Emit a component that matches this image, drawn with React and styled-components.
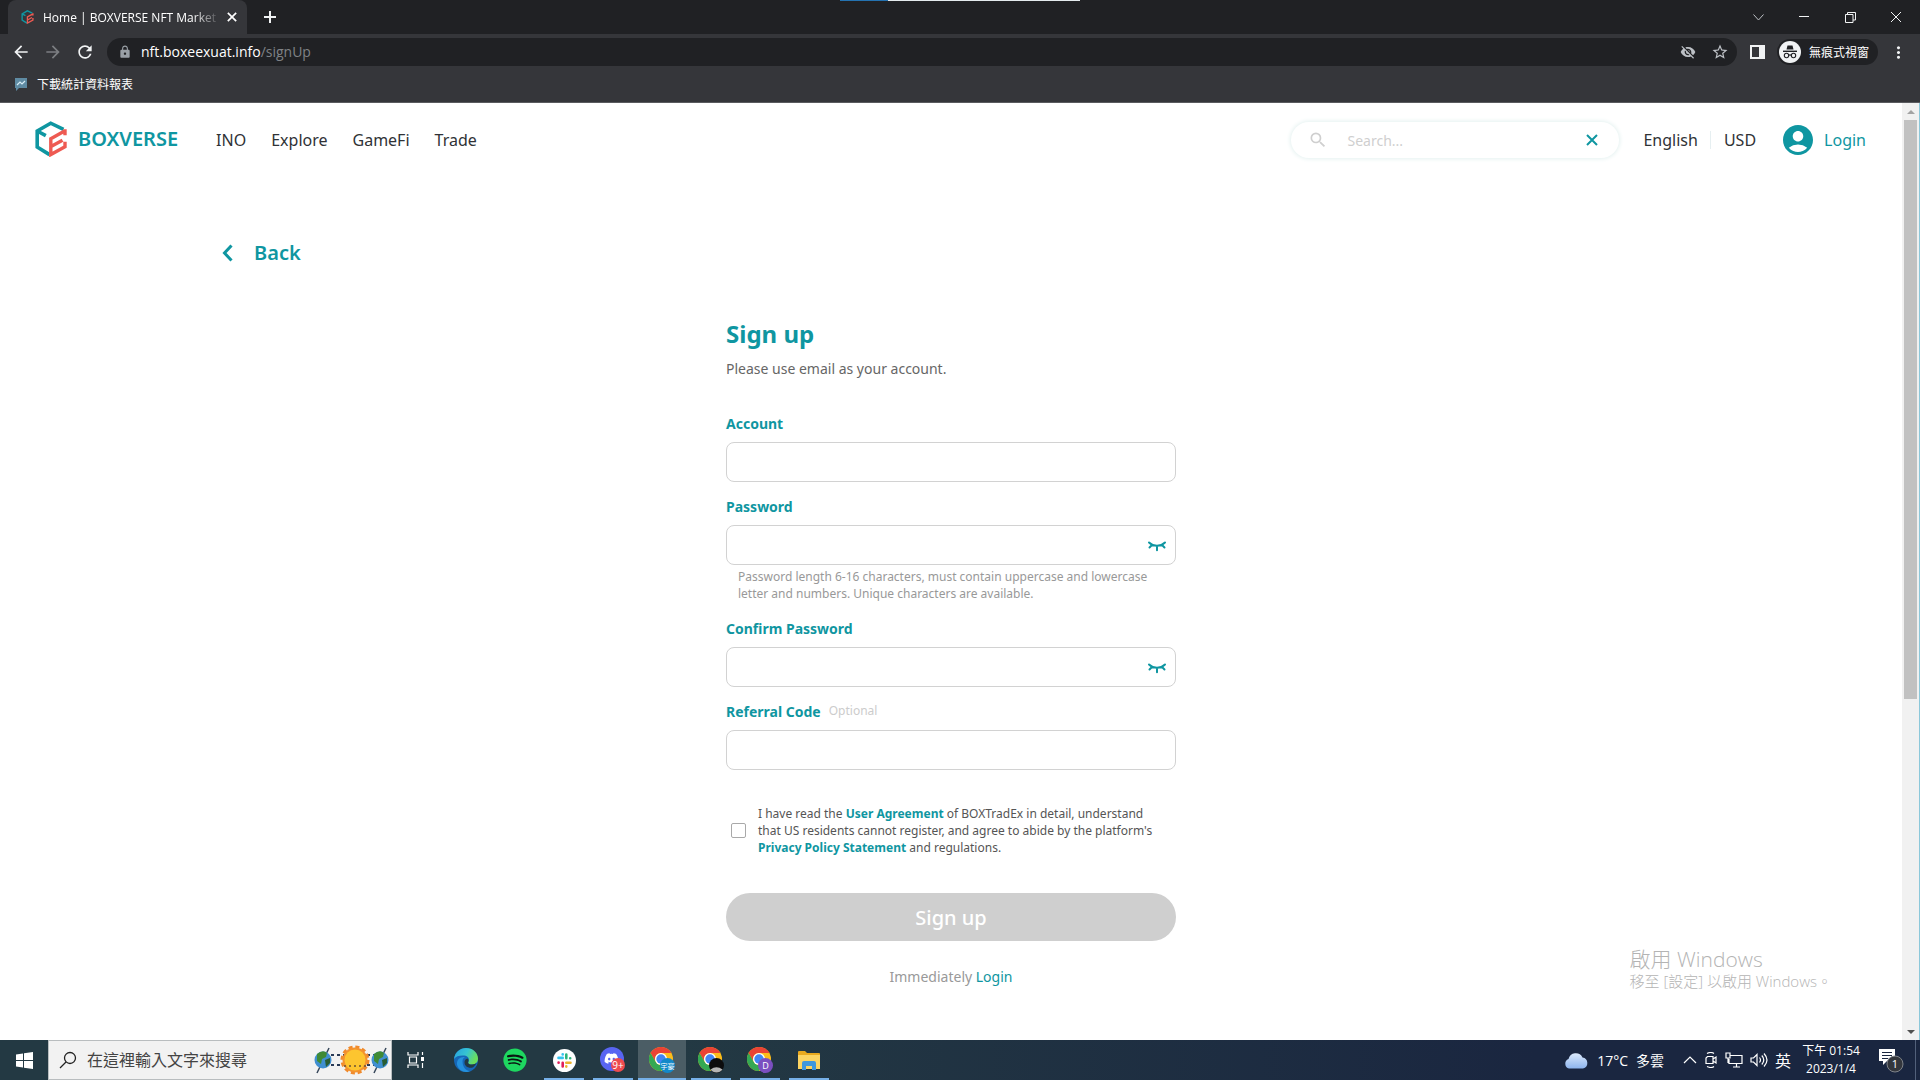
import React from "react";
import styled, { createGlobalStyle } from "styled-components";
import {
  MdArrowBack,
  MdArrowForward,
  MdRefresh,
  MdLock,
  MdVisibilityOff,
  MdStarBorder,
  MdMoreVert,
  MdSearch,
  MdAccountCircle,
} from "react-icons/md";
import { FaSpotify, FaDiscord } from "react-icons/fa";

const teal = "#0f96a1";
const systemFont = `"Open Sans", "Noto Sans CJK TC", sans-serif`;

const GlobalStyle = createGlobalStyle`
* { box-sizing: border-box; }
body {
  margin: 0;
  font-family: "Noto Sans", "Noto Sans CJK TC", sans-serif;
  background: #fff;
}
button, input { font: inherit; color: inherit; }
button { border: none; background: none; padding: 0; cursor: pointer; }
a { text-decoration: none; color: inherit; }
svg { display: block; flex: none; }
`;

const Screen = styled.div`
  height: 100vh;
  display: flex;
  flex-direction: column;
  overflow: hidden;
`;

/* browser */

const Browser = styled.div`
  background: #35363a;
  color: #fff;
  font-family: ${systemFont};
  border-bottom: 1px solid #5a5b5f;
`;

const TabStrip = styled.div`
  position: relative;
  height: 34px;
  display: flex;
  align-items: center;
  padding-left: 8px;
  background: #202124;
`;

const LoadLine = styled.div`
  position: absolute;
  top: 0;
  left: 50%;
  width: 240px;
  height: 1px;
  margin-left: -120px;
  background: linear-gradient(90deg, #2472b0 48px, #e4ebee 48px);
`;

const Tab = styled.div`
  height: 34px;
  width: 239px;
  display: flex;
  align-items: center;
  gap: 9px;
  padding: 0 10px 0 13px;
  border-radius: 8px 8px 0 0;
  background: #35363a;
  font-size: 12px;
`;

const TabTitle = styled.span`
  flex: 1;
  white-space: nowrap;
  mask-image: linear-gradient(90deg, #000 150px, transparent 178px);
`;

const ChromeButton = styled.button`
  width: ${(p) => p.$width || 32}px;
  height: 28px;
  display: flex;
  align-items: center;
  justify-content: center;
  color: ${(p) => p.$color || "#f1f3f4"};
`;

const WindowButtons = styled.div`
  margin-left: auto;
  padding-right: 1px;
  display: flex;
`;

const Toolbar = styled.div`
  height: 36px;
  display: flex;
  align-items: center;
  padding: 0 6px 0 5px;
`;

const AddressBar = styled.div`
  flex: 1;
  height: 28px;
  display: flex;
  align-items: center;
  margin: 0 5px 0 6px;
  padding: 0 1px 0 11px;
  border-radius: 14px;
  background: #202124;
  color: #9aa0a6;
  font-size: 14px;
`;

const Url = styled.span`
  flex: 1;
  margin-left: 9px;
  padding-bottom: 2px;
  color: #7f8286;
`;

const Host = styled.span`
  color: #fff;
`;

const Incognito = styled.button`
  display: flex;
  align-items: center;
  gap: 8px;
  height: 26px;
  padding: 0 9px 0 2px;
  margin: 0 4px 0 3px;
  border-radius: 13px;
  background: #202124;
  color: #fff;
  font-size: 12px;
`;

const Bookmarks = styled.div`
  height: 32px;
  display: flex;
  align-items: center;
  padding: 0 15px 4px;
`;

const Bookmark = styled.a`
  display: flex;
  align-items: center;
  gap: 10px;
  font-size: 12px;
`;

/* page */

const Viewport = styled.div`
  flex: 1;
  min-height: 0;
  display: flex;
  position: relative;
`;

const Page = styled.div`
  flex: 1;
  min-width: 0;
  overflow: hidden;
`;

const Header = styled.header`
  display: flex;
  align-items: center;
  padding: 18px 36px 0 35px;
  color: #2f3236;
`;

const Brand = styled.a`
  display: flex;
  align-items: center;
  gap: 11px;
  margin-right: 38px;
  padding-bottom: 2px;
  color: ${teal};
  font-size: 20px;
  line-height: 28px;
  font-weight: 600;
`;

const Nav = styled.nav`
  flex: 1;
  display: flex;
  gap: 25px;
  font-size: 16px;
`;

const SearchBox = styled.label`
  width: 328px;
  height: 36px;
  display: flex;
  align-items: center;
  gap: 17px;
  padding: 0 21px 0 17px;
  margin-right: 24px;
  border-radius: 18px;
  box-shadow: 0 0 4px 1px #e4f1f0;
  color: #cfcfcf;
`;

const SearchInput = styled.input`
  flex: 1;
  min-width: 0;
  border: none;
  outline: none;
  background: none;
  font-size: ${(p) => p.$size}px;

  &::placeholder {
    color: ${(p) => p.$hint};
    opacity: 1;
  }
`;

const ClearButton = styled.button`
  color: ${teal};
`;

const Option = styled.button`
  font-size: 16px;
  line-height: 22px;
`;

const Divider = styled.span`
  width: 1px;
  height: 18px;
  margin: 0 13px 0 12px;
  background: #e6eff1;
`;

const LoginLink = styled.a`
  display: flex;
  align-items: center;
  gap: 8px;
  margin-left: 24px;
  color: ${teal};
  font-size: 16px;
`;

const BackRow = styled.div`
  max-width: 1460px;
  margin: 80px auto 0;
`;

const BackLink = styled.a`
  display: inline-flex;
  align-items: center;
  gap: 21px;
  color: ${teal};
  font-size: 20px;
  line-height: 28px;
  font-weight: 600;
`;

const Form = styled.form`
  width: 450px;
  margin: 50px auto 0;
`;

const Title = styled.h1`
  margin: 0;
  color: ${teal};
  font-size: 24px;
  line-height: 34px;
  font-weight: 700;
`;

const Lead = styled.p`
  margin: 8px 0 36px;
  color: #666;
  font-size: 14px;
  line-height: 19px;
`;

const FieldBox = styled.div`
  margin-bottom: 15px;
`;

const LabelRow = styled.div`
  display: flex;
  gap: 8px;
  line-height: 19px;
  margin-bottom: 9px;
`;

const Label = styled.label`
  color: ${teal};
  font-size: 14px;
  font-weight: 700;
`;

const Optional = styled.span`
  color: #ccc;
  font-size: 12px;
  line-height: 17px;
`;

const InputBox = styled.div`
  height: 40px;
  display: flex;
  align-items: center;
  padding: 2px 8px 0 10px;
  border: 1px solid #d2d2d2;
  border-radius: 8px;
`;

const Input = styled.input`
  flex: 1;
  min-width: 0;
  border: none;
  outline: none;
  background: none;
  font-size: 14px;
`;

const EyeButton = styled.button`
  color: ${teal};
`;

const Hint = styled.p`
  margin: 0;
  padding: 3px 12px 2px;
  color: #999;
  font-size: 12px;
  line-height: 17px;
`;

const Terms = styled.div`
  display: flex;
  align-items: center;
  gap: 12px;
  margin-top: 35px;
  padding: 0 15px 0 5px;
  color: #555;
  font-size: 12px;
  line-height: 17px;
`;

const Checkbox = styled.input`
  appearance: none;
  flex: none;
  width: 15px;
  height: 15px;
  margin: 0;
  border: 1px solid #a9a9a9;
  border-radius: 2px;
`;

const TermsLink = styled.a`
  color: ${teal};
  font-weight: 700;
`;

const SubmitButton = styled.button`
  width: 100%;
  height: 48px;
  margin-top: 37px;
  border-radius: 24px;
  background: #cfcfcf;
  color: #fff;
  font-size: 20px;
  font-weight: 500;
`;

const LoginNote = styled.p`
  margin: 26px 0 0;
  color: #999;
  font-size: 14px;
  line-height: 20px;
  text-align: center;
`;

const NoteLink = styled.a`
  color: ${teal};
`;

const ScrollBar = styled.div`
  width: 18px;
  display: flex;
  flex-direction: column;
  align-items: center;
  background: #f1f1f1;
  border-right: 1px solid #8cc8da;
`;

const Arrow = styled.span`
  height: 17px;
  display: flex;
  align-items: center;
  color: ${(p) => p.$color};
`;

const Thumb = styled.span`
  width: 13px;
  flex: 579 1 0;
  background: #c1c1c1;
`;

const Track = styled.span`
  flex: 324 1 0;
`;

const Watermark = styled.div`
  position: absolute;
  right: 88px;
  bottom: 49px;
  color: #b4b4b4;
  font-family: ${systemFont};
  font-weight: 300;
`;

const WatermarkTitle = styled.div`
  font-size: 21px;
  line-height: 24px;
`;

const WatermarkText = styled.div`
  font-size: 15px;
  line-height: 20px;
`;

/* taskbar */

const Taskbar = styled.footer`
  height: 40px;
  display: flex;
  align-items: stretch;
  background: linear-gradient(90deg, #233943 0%, #233943 35%, #1a2640 80%);
  color: #fff;
  font-family: ${systemFont};
`;

const TaskButton = styled.button`
  position: relative;
  width: 48px;
  margin-right: ${(p) => p.$gap || 0}px;
  display: flex;
  align-items: center;
  justify-content: center;
  background: ${(p) => (p.$active ? "#4b5d65" : "none")};

  &::after {
    content: "";
    position: absolute;
    left: ${(p) => (p.$active ? 0 : 4)}px;
    right: ${(p) => (p.$active ? 0 : 4)}px;
    bottom: 0;
    height: 2px;
    background: ${(p) => (p.$open ? "#76b0e8" : "none")};
  }
`;

const TaskSearch = styled.label`
  width: 344px;
  display: flex;
  align-items: center;
  gap: 8px;
  padding: 0 2px 0 10px;
  border: 1px solid #b9bdbf;
  background: #f2f2f2;
  color: #222;
`;

const Tray = styled.div`
  margin-left: auto;
  display: flex;
  align-items: center;
  padding-right: 4px;
`;

const Weather = styled.button`
  display: flex;
  align-items: center;
  gap: 8px;
  margin-right: 19px;
  font-size: 14px;
`;

const TrayIcons = styled.div`
  display: flex;
  align-items: center;
  gap: 7px;
  font-size: 16px;
`;

const Clock = styled.div`
  width: 80px;
  font-size: 12px;
  line-height: 18px;
  text-align: center;
`;

const Notice = styled.button`
  width: 45px;
  border-right: 1px solid #52607a;
  height: 40px;
  display: flex;
  align-items: center;
  padding-left: 8px;
`;

const LogoIcon = ({ width, height }) => (
  <svg width={width} height={height} viewBox="0 0 32 36" fill="none">
    <path d="M28.5 8.3 15.7 2.2 2.2 10v16l12.3 7.6M2.2 10l8.6 4.6" stroke="#0f96a1" strokeWidth="3.6" />
    <path d="M30 8.2v6M30 9.8l-14.2 8v15.8L30 25.8v-5M16 25.6l11.5-6.4" stroke="#ee5a52" strokeWidth="3.4" />
  </svg>
);

const CrossIcon = ({ size, stroke = 1 }) => (
  <svg width={size} height={size} viewBox="0 0 12 12" stroke="currentColor" strokeWidth={stroke}>
    <path d="M1 1l10 10M11 1 1 11" />
  </svg>
);

const ClosedEye = () => (
  <svg width="20" height="12" viewBox="0 0 20 12" fill="none" stroke="currentColor" strokeWidth="2" strokeLinecap="round">
    <path d="M2 2.5c4.4 4.4 11.6 4.4 16 0M5 5 2.500 7.500M10 6v4.300M15 5l2.500 2.500" />
  </svg>
);

const IncognitoIcon = () => (
  <svg width="22" height="22" viewBox="0 0 22 22">
    <circle cx="11" cy="11" r="11" fill="#f1f3f4" />
    <path d="M7.500 8.500 8.500 4.500h5l1 4z" fill="#202124" />
    <path d="M4 10.300h14" stroke="#202124" strokeWidth="1.400" />
    <g fill="none" stroke="#202124" strokeWidth="1.100">
      <circle cx="7.500" cy="14.500" r="2.200" />
      <circle cx="14.500" cy="14.500" r="2.200" />
      <path d="M9.700 14.300q1.300-.8 2.600 0" />
    </g>
  </svg>
);

const ChartFlag = () => (
  <svg width="12" height="13" viewBox="0 0 12 13">
    <path d="M0 0h12v10H4L1 13V10H0z" fill="#5f8ba3" />
    <path d="M2 7l3-3 2 2 3-3" fill="none" stroke="#d6ecf5" strokeWidth="1.200" />
  </svg>
);

const WindowsIcon = () => (
  <svg width="17" height="17" viewBox="0 0 17 17" fill="#fff">
    <path d="M0 2.500 7 1.500V8H0zM8 1.300 17 0v8H8zM0 9h7v6.500l-7-1zM8 9h9v8l-9-1.300z" />
  </svg>
);

const Earth = ({ x }) => (
  <g>
    <path d={`M${x - 6} 28 ${x + 6} 3`} stroke="#36465a" strokeWidth="1.500" />
    <circle cx={x} cy="15" r="8.500" fill="#3f8fd0" />
    <path d={`M${x - 6} 9q6-5 10-1l-1 4-4 2-1 5-4-3z`} fill="#3f8a35" />
    <path d={`M${x + 2} 15l5-2 0 5-4 4z`} fill="#285d33" />
  </g>
);

const OrbitArt = () => (
  <svg width="75" height="30" viewBox="0 0 75 30">
    <path d="M11 10h53M11 20h53" stroke="#293a57" strokeWidth="1.800" strokeDasharray="3 3" />
    <circle cx="41" cy="15" r="13" fill="none" stroke="#f08a2c" strokeWidth="3" strokeDasharray="4 2.800" />
    <circle cx="41" cy="15" r="12.500" fill="#f3932f" />
    <circle cx="41" cy="15" r="10.500" fill="#fdc52f" />
    <path d="M30 21h22" stroke="#6b5335" strokeWidth="1.500" strokeDasharray="2 3" />
    <Earth x={9} />
    <Earth x={66} />
  </svg>
);

const TaskViewIcon = () => (
  <svg width="18" height="16" viewBox="0 0 18 16" fill="none" stroke="#fff" strokeWidth="1.200">
    <path d="M1 0v3h10V0M1 16v-3h10v3M2.500 5h7v6h-7zM15.500 0v3M15.500 11v5" />
    <path d="M15.500 5v4" strokeWidth="3" />
  </svg>
);

const EdgeIcon = () => (
  <svg width="24" height="24" viewBox="0 0 24 24">
    <defs>
      <linearGradient id="edgeTop" x1="0" y1="0" x2="1" y2=".4">
        <stop offset="0" stopColor="#279fe0" />
        <stop offset=".55" stopColor="#36c4d2" />
        <stop offset="1" stopColor="#6ade5c" />
      </linearGradient>
    </defs>
    <circle cx="12" cy="12" r="12" fill="#1667b7" />
    <path d="M0 11C1 4 6 0 12 0c7 0 12 5 12 10.500 0 4-3 6-6 6-3.500 0-4.500-1.500-3.500-2.800C16 11 14 8 10.500 7.500 6 7 2 8 0 11z" fill="url(#edgeTop)" />
    <path d="M8.500 13c0-2 1.200-3.300 2.500-4-5-.5-8.500 2.500-8 7.500C4 21 8 24 12 24c2 0 3-.3 4-.8-5-.6-7.500-5-7.500-10.200z" fill="#2490dc" />
    <path d="M13.500 10.500c1.500 1.500 1 2.700.7 3.400-.4 1.300.6 2.600 3.800 2.600 2 0 3.600-.7 4.600-1.700-.8 2-2 3.400-3.400 4.400-4 1.800-9-.7-8.700-5.200 0-1.700 1.200-3 3-3.500z" fill="#233943" />
  </svg>
);

const SlackIcon = () => (
  <svg width="23" height="23" viewBox="0 0 23 23" fill="none" strokeWidth="2.600" strokeLinecap="round">
    <circle cx="11.500" cy="11.500" r="11.500" fill="#fff" />
    <path d="M9.700 5.200v.2M9.700 8.900H5.500" stroke="#36c5f0" />
    <path d="M13.300 5.500v3.700M17.200 9.200v.1" stroke="#2eb67d" />
    <path d="M13.300 13.700h4.200M13.300 17.400v.2" stroke="#ecb22e" />
    <path d="M9.700 13.700v3.800M5.600 13.600v.1" stroke="#e01e5a" />
  </svg>
);

const Discord = () => (
  <svg width="26" height="26" viewBox="0 0 26 26">
    <circle cx="12" cy="12" r="12" fill="#5865f2" />
    <FaDiscord x="4" y="4" size="15" color="#fff" />
    <circle cx="18" cy="18" r="7" fill="#ee4b4f" />
    <text x="18" y="21.500" textAnchor="middle" fill="#fff" fontSize="10">9+</text>
  </svg>
);

const ChromeIcon = ({ badge, children }) => (
  <svg width="26" height="26" viewBox="0 0 26 26">
    <circle cx="12" cy="12" r="12" fill="#fbbc1a" />
    <path d="M1.600 6A12 12 0 0 1 22.400 6H12a6 6 0 0 0-5.200 9z" fill="#ea4335" />
    <path d="M1.600 6A12 12 0 0 0 12 24l5.200-9A6 6 0 0 1 6.800 15z" fill="#34a853" />
    <circle cx="12" cy="12" r="6" fill="#fff" />
    <circle cx="12" cy="12" r="4.700" fill="#4285f4" />
    <circle cx="18.500" cy="18.500" r="7.500" fill={badge} />
    {children}
  </svg>
);

const FolderIcon = () => (
  <svg width="22" height="19" viewBox="0 0 22 19">
    <path d="M0 1q0-1 1-1h6l2 2h12q1 0 1 1v15H0z" fill="#e9a91e" />
    <path d="M0 4h22v14H0z" fill="#fcd462" />
    <path d="M4 19v-7q0-2 2-2h10q2 0 2 2v7h-4v-4H8v4z" fill="#3f97dd" />
  </svg>
);

const CloudIcon = () => (
  <svg width="25" height="17" viewBox="0 0 25 17">
    <defs>
      <linearGradient id="cloud" x1="0" y1="0" x2="0" y2="1">
        <stop offset="0" stopColor="#dbe9fb" />
        <stop offset="1" stopColor="#8db4ee" />
      </linearGradient>
    </defs>
    <path d="M5 16.500a5 5 0 0 1-.5-9.500A7.500 7.500 0 0 1 18.500 5.500 5.600 5.600 0 0 1 19 16.500z" fill="url(#cloud)" />
  </svg>
);

const TrayGlyph = ({ width, d }) => (
  <svg width={width} height="16" viewBox={`0 0 ${width} 16`} fill="none" stroke="#fff" strokeWidth="1.200">
    <path d={d} />
  </svg>
);

const NoticeIcon = () => (
  <svg width="27" height="26" viewBox="0 0 27 26">
    <path d="M0 2h16v12H8l-4 4v-4H0z" fill="#fff" />
    <path d="M3 5.500h10M3 8.500h10M3 11.500h6" stroke="#1a2640" strokeWidth="1.200" />
    <circle cx="16" cy="17" r="8" fill="#33363c" stroke="#7f8389" />
    <text x="16" y="21" textAnchor="middle" fill="#fff" fontSize="11">1</text>
  </svg>
);

const links = ["INO", "Explore", "GameFi", "Trade"];

const Field = ({ id, label, type = "text", optional, hint }) => (
  <FieldBox>
    <LabelRow>
      <Label htmlFor={id}>{label}</Label>
      {optional && <Optional>Optional</Optional>}
    </LabelRow>
    <InputBox>
      <Input id={id} type={type} />
      {type === "password" && (
        <EyeButton type="button" aria-label="Show password">
          <ClosedEye />
        </EyeButton>
      )}
    </InputBox>
    {hint && <Hint>{hint}</Hint>}
  </FieldBox>
);

const BrowserBar = () => (
  <Browser>
    <TabStrip>
      <LoadLine />
      <Tab>
        <LogoIcon width={13} height={14} />
        <TabTitle>Home | BOXVERSE NFT Market</TabTitle>
        <CrossIcon size={10} stroke={2} />
      </Tab>
      <ChromeButton $width={46} aria-label="New tab">
        <svg width="12" height="12" viewBox="0 0 12 12" stroke="currentColor" strokeWidth="2">
          <path d="M6 0v12M0 6h12" />
        </svg>
      </ChromeButton>
      <WindowButtons>
        <ChromeButton $width={46} aria-label="Search tabs" $color="#bdc1c6">
          <svg width="11" height="7" viewBox="0 0 11 7" fill="none" stroke="currentColor">
            <path d="M.5.500l5 5.500 5-5.500" />
          </svg>
        </ChromeButton>
        <ChromeButton $width={46} aria-label="Minimize">
          <svg width="10" height="2" viewBox="0 0 10 2" fill="currentColor">
            <path d="M0 0h10v1H0z" />
          </svg>
        </ChromeButton>
        <ChromeButton $width={46} aria-label="Restore">
          <svg width="11" height="11" viewBox="0 0 11 11" fill="none" stroke="currentColor">
            <path d="M.5 2.500h7.500v8H.5zM2.500 2.500v-2h8v7.500H8" />
          </svg>
        </ChromeButton>
        <ChromeButton $width={46} aria-label="Close">
          <CrossIcon size={12} />
        </ChromeButton>
      </WindowButtons>
    </TabStrip>
    <Toolbar>
      <ChromeButton aria-label="Back"><MdArrowBack size={20} /></ChromeButton>
      <ChromeButton aria-label="Forward" $color="#7c7e82"><MdArrowForward size={20} /></ChromeButton>
      <ChromeButton aria-label="Reload"><MdRefresh size={20} /></ChromeButton>
      <AddressBar>
        <MdLock size={14} />
        <Url><Host>nft.boxeexuat.info</Host>/signUp</Url>
        <ChromeButton $color="#bdc1c6" aria-label="Cookies blocked"><MdVisibilityOff size={16} /></ChromeButton>
        <ChromeButton $color="#bdc1c6" aria-label="Bookmark"><MdStarBorder size={18} /></ChromeButton>
      </AddressBar>
      <ChromeButton aria-label="Side panel">
        <svg width="15" height="14" viewBox="0 0 15 14">
          <path d="M0 0h15v14H0z" fill="#f1f3f4" />
          <path d="M2 2h7v10H2z" fill="#35363a" />
        </svg>
      </ChromeButton>
      <Incognito><IncognitoIcon />無痕式視窗</Incognito>
      <ChromeButton aria-label="Menu"><MdMoreVert size={19} /></ChromeButton>
    </Toolbar>
    <Bookmarks>
      <Bookmark href="#"><ChartFlag />下載統計資料報表</Bookmark>
    </Bookmarks>
  </Browser>
);

const SiteHeader = () => (
  <Header>
    <Brand href="#"><LogoIcon width={32} height={36} />BOXVERSE</Brand>
    <Nav>
      {links.map((name) => (
        <a key={name} href="#">{name}</a>
      ))}
    </Nav>
    <SearchBox>
      <MdSearch size={20} />
      <SearchInput $size={14} $hint="#cfcfcf" placeholder="Search..." aria-label="Search" />
      <ClearButton aria-label="Clear"><CrossIcon size={12} stroke={2} /></ClearButton>
    </SearchBox>
    <Option>English</Option>
    <Divider />
    <Option>USD</Option>
    <LoginLink href="#"><MdAccountCircle size={36} />Login</LoginLink>
  </Header>
);

const SignUp = () => (
  <main>
    <BackRow>
      <BackLink href="#">
        <svg width="12" height="18" viewBox="0 0 12 18" fill="none" stroke="currentColor" strokeWidth="3">
          <path d="M10.500 1.500 3.500 9l7 7.500" />
        </svg>
        Back
      </BackLink>
    </BackRow>
    <Form>
      <Title>Sign up</Title>
      <Lead>Please use email as your account.</Lead>
      <Field id="account" label="Account" />
      <Field
        id="password"
        label="Password"
        type="password"
        hint="Password length 6-16 characters, must contain uppercase and lowercase letter and numbers. Unique characters are available."
      />
      <Field id="confirm" label="Confirm Password" type="password" />
      <Field id="referral" label="Referral Code" optional />
      <Terms>
        <Checkbox type="checkbox" id="terms" />
        <label htmlFor="terms">
          I have read the <TermsLink href="#">User Agreement</TermsLink> of BOXTradEx in detail, understand
          that US residents cannot register, and agree to abide by the platform's{" "}
          <TermsLink href="#">Privacy Policy Statement</TermsLink> and regulations.
        </label>
      </Terms>
      <SubmitButton type="button">Sign up</SubmitButton>
      <LoginNote>Immediately <NoteLink href="#">Login</NoteLink></LoginNote>
    </Form>
  </main>
);

const WindowsBar = () => (
  <Taskbar>
    <TaskButton aria-label="Start"><WindowsIcon /></TaskButton>
    <TaskSearch>
      <svg width="18" height="18" viewBox="0 0 18 18" fill="none" stroke="#222" strokeWidth="1.300">
        <circle cx="11" cy="7" r="5.500" />
        <path d="M7 11 1 17" />
      </svg>
      <SearchInput $size={16} $hint="#444" placeholder="在這裡輸入文字來搜尋" aria-label="搜尋" />
      <OrbitArt />
    </TaskSearch>
    <TaskButton $gap={2} aria-label="Task view"><TaskViewIcon /></TaskButton>
    <TaskButton $gap={1} aria-label="Edge"><EdgeIcon /></TaskButton>
    <TaskButton $gap={1} aria-label="Spotify">
      <svg width="24" height="24" viewBox="0 0 24 24">
        <circle cx="12" cy="12" r="11" fill="#0b1512" />
        <FaSpotify size={24} color="#1ed760" />
      </svg>
    </TaskButton>
    <TaskButton $gap={1} $open aria-label="Slack"><SlackIcon /></TaskButton>
    <TaskButton $gap={1} $open aria-label="Discord"><Discord /></TaskButton>
    <TaskButton $gap={1} $open $active aria-label="Chrome">
      <ChromeIcon badge="#1389c9">
        <text x="18.500" y="21.500" textAnchor="middle" fill="#fff" fontSize="7">宇豪</text>
      </ChromeIcon>
    </TaskButton>
    <TaskButton $gap={1} $open aria-label="Chrome">
      <ChromeIcon badge="#0c0c0d">
        <path d="M12.500 22.500q6-4.500 12 0a7.500 7.500 0 0 1-12 0z" fill="#b5b5b5" />
      </ChromeIcon>
    </TaskButton>
    <TaskButton $gap={1} $open aria-label="Chrome">
      <ChromeIcon badge="#7b4fc0">
        <text x="18.500" y="22" textAnchor="middle" fill="#fff" fontSize="9">D</text>
      </ChromeIcon>
    </TaskButton>
    <TaskButton $gap={1} $open aria-label="Files"><FolderIcon /></TaskButton>
    <Tray>
      <Weather><CloudIcon /><span>17°C</span><span>多雲</span></Weather>
      <TrayIcons>
        <TrayGlyph width={14} d="M1 11l6-6 6 6" />
        <TrayGlyph width={14} d="M3.500 4.500h5.500v7H2v-5.500zM9 7l3-2v6l-3-2M3 1.500q4-2 7 0M3 14.500q4 2 7 0" />
        <TrayGlyph width={18} d="M5 3.500h12v8H4V7M8 15h7M11.500 11.500V15M1 1h4v5H1zM3 6v5" />
        <TrayGlyph width={18} d="M1 6h2.500L7 2.500v11L3.500 10H1zM9.500 5.500q2 2.500 0 5M11.800 3.500q4 4.500 0 9M14 1.500q6 6.500 0 13" />
        <span>英</span>
      </TrayIcons>
      <Clock>
        <div>下午 01:54</div>
        <div>2023/1/4</div>
      </Clock>
      <Notice aria-label="Notifications"><NoticeIcon /></Notice>
    </Tray>
  </Taskbar>
);

const App = () => {
  return (
    <Screen>
      <GlobalStyle />
      <BrowserBar />
      <Viewport>
        <Page>
          <SiteHeader />
          <SignUp />
        </Page>
        <ScrollBar>
          <Arrow $color="#a3a3a3">
            <svg width="8" height="4" viewBox="0 0 8 4" fill="currentColor"><path d="M0 4l4-4 4 4z" /></svg>
          </Arrow>
          <Thumb />
          <Track />
          <Arrow $color="#505050">
            <svg width="8" height="4" viewBox="0 0 8 4" fill="currentColor"><path d="M0 0l4 4 4-4z" /></svg>
          </Arrow>
        </ScrollBar>
        <Watermark>
          <WatermarkTitle>啟用 Windows</WatermarkTitle>
          <WatermarkText>移至 [設定] 以啟用 Windows。</WatermarkText>
        </Watermark>
      </Viewport>
      <WindowsBar />
    </Screen>
  );
};

export default App;
